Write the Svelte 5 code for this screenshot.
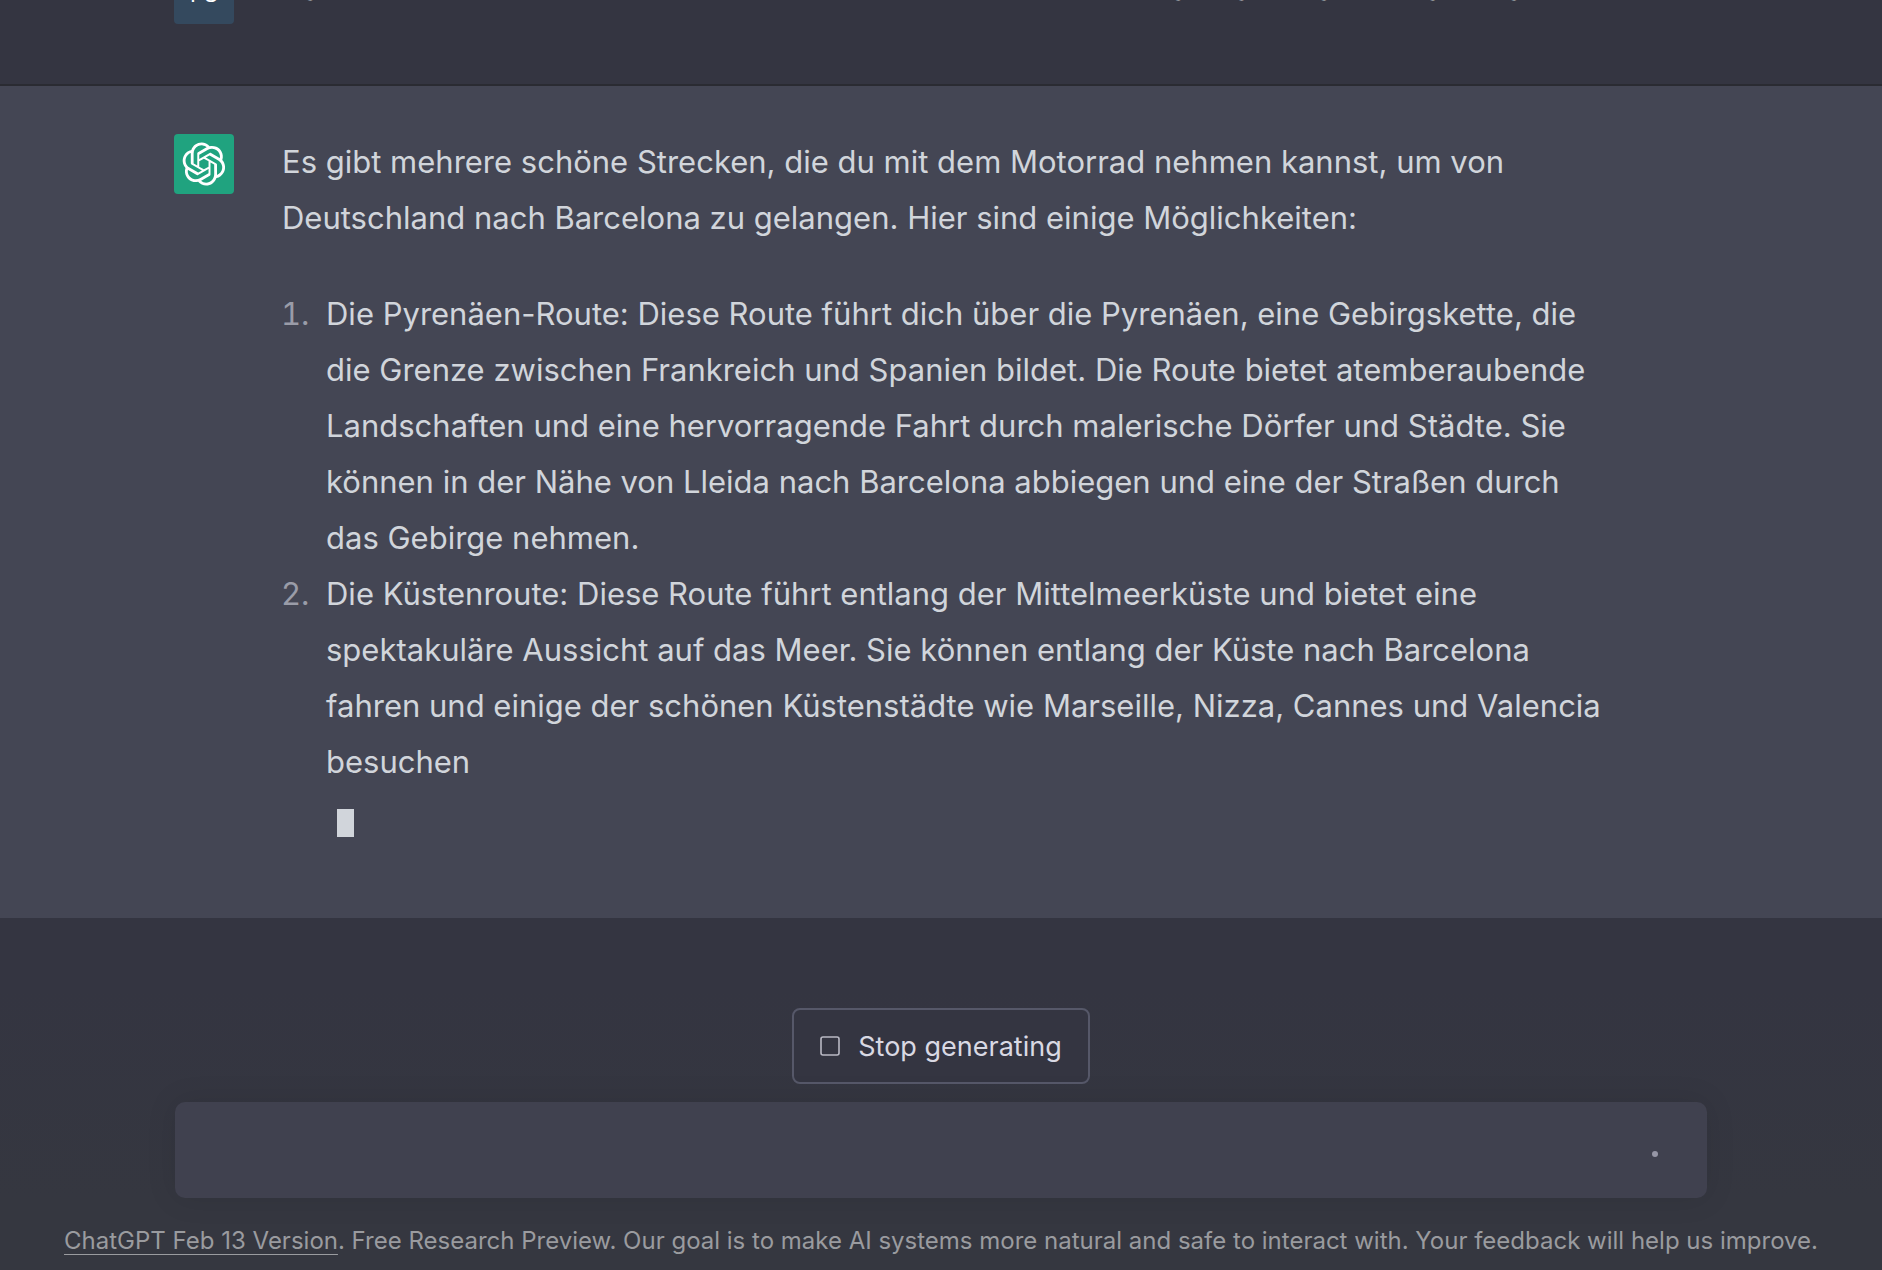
<script lang="ts">
	/**
	 * Chat view with a streaming answer and the message composer below it.
	 * The thread is anchored to its end, so older messages leave at the top.
	 */

	const question =
		'Kannst du mir eine schöne Route nennen um mit dem Motorrad nach Barcelona zu fahren?';
	const intro =
		'Es gibt mehrere schöne Strecken, die du mit dem Motorrad nehmen kannst, um von Deutschland nach Barcelona zu gelangen. Hier sind einige Möglichkeiten:';
	const routes = [
		'Die Pyrenäen-Route: Diese Route führt dich über die Pyrenäen, eine Gebirgskette, die die Grenze zwischen Frankreich und Spanien bildet. Die Route bietet atemberaubende Landschaften und eine hervorragende Fahrt durch malerische Dörfer und Städte. Sie können in der Nähe von Lleida nach Barcelona abbiegen und eine der Straßen durch das Gebirge nehmen.',
		'Die Küstenroute: Diese Route führt entlang der Mittelmeerküste und bietet eine spektakuläre Aussicht auf das Meer. Sie können entlang der Küste nach Barcelona fahren und einige der schönen Küstenstädte wie Marseille, Nizza, Cannes und Valencia besuchen'
	];

	let message = $state('');
	let generating = $state(true);
</script>

<div class="chat">
	<main class="thread">
		<article class="message user">
			<div class="column">
				<div class="avatar">PS</div>
				<p class="question">{question}</p>
			</div>
		</article>

		<article class="message assistant">
			<div class="column">
				<div class="avatar">
					<svg width="44" height="44" viewBox="0 0 41 41" fill="none" aria-hidden="true">
						<path
							d="M37.5324 16.8707C37.9808 15.5241 38.1363 14.0974 37.9886 12.6859C37.8409 11.2744 37.3934 9.91076 36.676 8.68622C35.6126 6.83404 33.9882 5.3676 32.0373 4.4985C30.0864 3.62941 27.9098 3.40259 25.8215 3.85078C24.8796 2.7893 23.7219 1.94125 22.4257 1.36341C21.1295 0.785575 19.7249 0.491269 18.3058 0.500197C16.1708 0.495044 14.0893 1.16803 12.3614 2.42214C10.6335 3.67624 9.34853 5.44666 8.6917 7.47815C7.30085 7.76286 5.98686 8.3414 4.8377 9.17505C3.68854 10.0087 2.73073 11.0782 2.02839 12.312C0.956464 14.1591 0.498905 16.2988 0.721698 18.4228C0.944492 20.5467 1.83612 22.5449 3.268 24.1293C2.81966 25.4759 2.66413 26.9026 2.81182 28.3141C2.95951 29.7256 3.40701 31.0892 4.12437 32.3138C5.18791 34.1659 6.8123 35.6322 8.76321 36.5013C10.7141 37.3704 12.8907 37.5973 14.9789 37.1492C15.9208 38.2107 17.0786 39.0587 18.3747 39.6366C19.6709 40.2144 21.0755 40.5087 22.4946 40.4998C24.6307 40.5054 26.7133 39.8321 28.4418 38.5772C30.1704 37.3223 31.4556 35.5506 32.1119 33.5179C33.5027 33.2332 34.8167 32.6547 35.9659 31.821C37.115 30.9874 38.0728 29.9178 38.7752 28.684C39.8458 26.8371 40.3023 24.6979 40.0789 22.5748C39.8556 20.4517 38.9639 18.4544 37.5324 16.8707ZM22.4978 37.8849C20.7443 37.8874 19.0459 37.2733 17.6994 36.1501C17.7601 36.117 17.8666 36.0586 17.936 36.0161L25.9004 31.4156C26.1003 31.3019 26.2663 31.137 26.3813 30.9378C26.4964 30.7386 26.5563 30.5124 26.5549 30.2825V19.0542L29.9213 20.998C29.9389 21.0068 29.9541 21.0198 29.9656 21.0359C29.977 21.052 29.9842 21.0707 29.9867 21.0902V30.3889C29.9842 32.375 29.1946 34.2791 27.7909 35.6841C26.3872 37.0892 24.4838 37.8806 22.4978 37.8849ZM6.39227 31.0064C5.51397 29.4888 5.19742 27.7107 5.49804 25.9832C5.55718 26.0187 5.66048 26.0818 5.73461 26.1244L13.699 30.7248C13.8975 30.8408 14.1233 30.902 14.3532 30.902C14.583 30.902 14.8088 30.8408 15.0073 30.7248L24.731 25.1103V28.9979C24.7321 29.0177 24.7283 29.0376 24.7199 29.0556C24.7115 29.0736 24.6988 29.0893 24.6829 29.1012L16.6317 33.7497C14.9096 34.7416 12.8643 35.0097 10.9447 34.4954C9.02506 33.9811 7.38785 32.7263 6.39227 31.0064ZM4.29707 13.6194C5.17156 12.0998 6.55279 10.9364 8.19885 10.3327C8.19885 10.4013 8.19491 10.5228 8.19491 10.6071V19.808C8.19351 20.0378 8.25334 20.2638 8.36823 20.4629C8.48312 20.6619 8.64893 20.8267 8.84863 20.9404L18.5723 26.5542L15.206 28.4979C15.1894 28.5089 15.1703 28.5155 15.1505 28.5173C15.1307 28.5191 15.1107 28.516 15.0924 28.5082L7.04046 23.8557C5.32135 22.8601 4.06716 21.2235 3.55289 19.3046C3.03862 17.3858 3.30624 15.3413 4.29707 13.6194ZM31.955 20.0556L22.2312 14.4411L25.5976 12.4981C25.6142 12.4872 25.6333 12.4805 25.6531 12.4787C25.6729 12.4769 25.6928 12.4801 25.7111 12.4879L33.7631 17.1364C34.9967 17.849 36.0017 18.8982 36.6606 20.1613C37.3194 21.4244 37.6047 22.849 37.4832 24.2684C37.3617 25.6878 36.8382 27.0432 35.9743 28.1759C35.1103 29.3086 33.9415 30.1717 32.6047 30.6641C32.6047 30.5947 32.6047 30.4733 32.6047 30.3889V21.188C32.6066 20.9586 32.5474 20.7328 32.4332 20.5338C32.319 20.3348 32.154 20.1698 31.955 20.0556ZM35.3055 15.0128C35.2464 14.9765 35.1431 14.9142 35.069 14.8717L27.1045 10.2712C26.906 10.1554 26.6803 10.0943 26.4504 10.0943C26.2206 10.0943 25.9948 10.1554 25.7963 10.2712L16.0726 15.8858V11.9982C16.0715 11.9783 16.0753 11.9585 16.0837 11.9405C16.0921 11.9225 16.1048 11.9068 16.1207 11.8949L24.1719 7.25025C25.4053 6.53903 26.8158 6.19376 28.2383 6.25482C29.6608 6.31589 31.0364 6.78077 32.2044 7.59508C33.3723 8.40939 34.2842 9.53945 34.8334 10.8531C35.3826 12.1667 35.5464 13.6095 35.3055 15.0128ZM14.2424 21.9419L10.8752 19.9981C10.8576 19.9893 10.8423 19.9763 10.8309 19.9602C10.8195 19.9441 10.8122 19.9254 10.8098 19.9058V10.6071C10.8107 9.18295 11.2173 7.78848 11.9819 6.58696C12.7466 5.38544 13.8377 4.42659 15.1275 3.82264C16.4173 3.21869 17.8524 2.99464 19.2649 3.1767C20.6775 3.35876 22.0089 3.93941 23.1034 4.85067C23.0427 4.88379 22.937 4.94215 22.8668 4.98473L14.9024 9.58517C14.7025 9.69878 14.5366 9.86356 14.4215 10.0626C14.3065 10.2616 14.2466 10.4877 14.2479 10.7175L14.2424 21.9419ZM16.071 17.9991L20.4018 15.4978L24.7325 17.9975V22.9985L20.4018 25.4983L16.071 22.9985V17.9991Z"
							fill="currentColor"
						/>
					</svg>
				</div>
				<div class="answer" aria-live="polite">
					<p>{intro}</p>
					<ol>
						{#each routes as route}
							<li>{route}</li>
						{/each}
					</ol>
					{#if generating}
						<div class="cursor-line"><span class="cursor" aria-hidden="true"></span></div>
					{/if}
				</div>
			</div>
		</article>
	</main>

	<footer class="composer">
		<form class="composer-form" onsubmit={(e) => e.preventDefault()}>
			<button class="stop" type="button" onclick={() => (generating = false)}>
				<svg width="20" height="20" viewBox="0 0 20 20" fill="none" aria-hidden="true">
					<rect x="1" y="1" width="18" height="18" rx="2" stroke="currentColor" stroke-width="1.6" />
				</svg>
				Stop generating
			</button>
			<div class="input-box">
				<textarea rows="1" aria-label="Message" bind:value={message}></textarea>
				<button class="send" type="submit" aria-label="Send message" disabled={generating}>
					<span class="dot"></span>
				</button>
			</div>
		</form>
		<p class="notice">
			<a href="#release-notes">ChatGPT Feb 13 Version</a>. Free Research Preview. Our goal is to make AI
			systems more natural and safe to interact with. Your feedback will help us improve.
		</p>
	</footer>
</div>

<style>
	:global(body) {
		margin: 0;
		background: #343541;
	}

	.chat {
		display: flex;
		flex-direction: column;
		height: 100vh;
		overflow: hidden;
		font-family: Inter, 'Liberation Sans', sans-serif;
		color: #d1d5db;
		background: #343541;
	}

	p,
	ol {
		margin: 0;
	}

	/* Anchored to the last message */
	.thread {
		display: flex;
		flex: 1;
		flex-direction: column;
		justify-content: flex-end;
		min-height: 0;
		overflow: hidden;
	}

	.message {
		flex-shrink: 0;
		padding: 48px 24px;
	}

	.column {
		display: flex;
		gap: 48px;
		max-width: 1534px;
		margin: 0 auto;
	}

	.user {
		padding-bottom: 60px;
		border-bottom: 2px solid #2a2b32;
	}

	.assistant {
		padding-bottom: 72px;
		background: #444654;
	}

	.avatar {
		display: flex;
		flex-shrink: 0;
		align-items: center;
		justify-content: center;
		width: 60px;
		height: 60px;
		border-radius: 4px;
		font-size: 22px;
		color: #fff;
		background: #34495e;
	}

	.assistant .avatar {
		background: #20a37f;
	}

	.question,
	.answer {
		flex: 1;
		min-width: 0;
		font-size: 31px;
	}

	.question {
		line-height: 50px;
	}

	.answer {
		padding-right: 96px;
		line-height: 56px;
	}

	ol {
		margin-top: 40px;
		padding-left: 44px;
	}

	li::marker {
		content: counter(list-item) '.\00a0\00a0';
		color: #9a9ca8;
	}

	.cursor-line {
		display: flex;
		align-items: center;
		height: 56px;
		padding: 10px 0 0 55px;
		box-sizing: border-box;
	}

	.cursor {
		width: 17px;
		height: 28px;
		background: #d1d5db;
	}

	.composer {
		padding: 90px 24px 10px;
		background: linear-gradient(180deg, #343541, #343541 20%, #353740 80%);
	}

	.composer-form {
		display: flex;
		flex-direction: column;
		align-items: center;
		gap: 18px;
		max-width: 1532px;
		margin: 0 auto;
	}

	.stop {
		display: flex;
		align-items: center;
		gap: 18px;
		height: 76px;
		padding: 0 26px;
		border: 2px solid #565869;
		border-radius: 8px;
		font: inherit;
		font-size: 27px;
		color: #d9d9e3;
		background: #343541;
	}

	.stop svg {
		color: #b9b9c4;
	}

	.input-box {
		display: flex;
		align-items: center;
		width: 100%;
		height: 96px;
		box-sizing: border-box;
		padding: 0 32px;
		border-radius: 10px;
		background: #40414f;
		box-shadow: 0 0 30px rgba(0, 0, 0, 0.1);
	}

	textarea {
		flex: 1;
		height: 48px;
		padding: 0;
		border: 0;
		outline: 0;
		resize: none;
		font: inherit;
		font-size: 31px;
		line-height: 48px;
		color: #fff;
		background: transparent;
	}

	.send {
		display: flex;
		align-items: center;
		justify-content: center;
		width: 40px;
		height: 40px;
		padding: 8px 0 0;
		border: 0;
		background: transparent;
	}

	.dot {
		width: 6px;
		height: 6px;
		border-radius: 50%;
		background: #9696a6;
	}

	.notice {
		margin-top: 24px;
		font-size: 24px;
		line-height: 38px;
		text-align: center;
		color: #9a9b9f;
	}

	.notice a {
		color: inherit;
		text-decoration: underline;
		text-decoration-thickness: 1px;
		text-underline-offset: 5px;
	}
</style>
